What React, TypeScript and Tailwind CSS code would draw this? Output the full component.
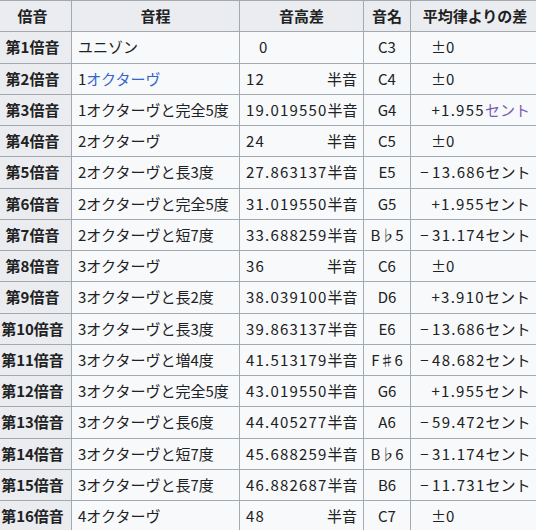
const rows = [
  { n: 1, iv: 'ユニゾン', st: '0', whole: true, note: 'C3', dev: '±0' },
  { n: 2, iv: '1オクターヴ', st: '12', whole: true, note: 'C4', dev: '±0', link: true },
  { n: 3, iv: '1オクターヴと完全5度', st: '19.019550', note: 'G4', dev: '+1.955', visited: true },
  { n: 4, iv: '2オクターヴ', st: '24', whole: true, note: 'C5', dev: '±0' },
  { n: 5, iv: '2オクターヴと長3度', st: '27.863137', note: 'E5', dev: '−13.686' },
  { n: 6, iv: '2オクターヴと完全5度', st: '31.019550', note: 'G5', dev: '+1.955' },
  { n: 7, iv: '2オクターヴと短7度', st: '33.688259', note: 'B♭5', dev: '−31.174' },
  { n: 8, iv: '3オクターヴ', st: '36', whole: true, note: 'C6', dev: '±0' },
  { n: 9, iv: '3オクターヴと長2度', st: '38.039100', note: 'D6', dev: '+3.910' },
  { n: 10, iv: '3オクターヴと長3度', st: '39.863137', note: 'E6', dev: '−13.686' },
  { n: 11, iv: '3オクターヴと増4度', st: '41.513179', note: 'F♯6', dev: '−48.682' },
  { n: 12, iv: '3オクターヴと完全5度', st: '43.019550', note: 'G6', dev: '+1.955' },
  { n: 13, iv: '3オクターヴと長6度', st: '44.405277', note: 'A6', dev: '−59.472' },
  { n: 14, iv: '3オクターヴと短7度', st: '45.688259', note: 'B♭6', dev: '−31.174' },
  { n: 15, iv: '3オクターヴと長7度', st: '46.882687', note: 'B6', dev: '−11.731' },
  { n: 16, iv: '4オクターヴ', st: '48', whole: true, note: 'C7', dev: '±0' },
];

const cell = 'border border-[#a2a9b1] px-[6px] py-[3px] h-[31.25px] whitespace-nowrap';
const head = `${cell} bg-[#eaecf0] font-bold text-center`;
const body = `${cell} bg-[#f8f9fa]`;

// cents column: the minus sign is drawn full width in the original
const Cents = ({ dev, visited }: { dev: string; visited?: boolean }) => {
  const neg = dev.startsWith('−');
  return (
    <span className="pr-[3px]">
      {neg ? (
        <span className="inline-block w-[15px] text-center">−</span>
      ) : null}
      <span className="tracking-[1.3px]">{neg ? dev.slice(1) : dev}</span>
      <span className={visited ? 'text-[#795cb2]' : ''}>セント</span>
    </span>
  );
};

export default function App() {
  return (
    <div className="w-[536px] h-[530px] overflow-hidden bg-white">
      <table
        className="ml-[-7px] border-collapse table-fixed text-[15px] leading-[24px] text-[#202122]"
        style={{ fontFamily: '"Noto Sans CJK JP", "Noto Sans", sans-serif', width: 546 }}
      >
        <colgroup>
          <col className="w-[78px]" />
          <col className="w-[168px]" />
          <col className="w-[124px]" />
          <col className="w-[47px]" />
          <col className="w-[129px]" />
        </colgroup>
        <thead>
          <tr>
            <th className={head}>倍音</th>
            <th className={head}>音程</th>
            <th className={head}>音高差</th>
            <th className={head}>音名</th>
            <th className={head}>平均律よりの差</th>
          </tr>
        </thead>
        <tbody>
          {rows.map((r) => (
            <tr key={r.n}>
              <th className={head}>第{r.n}倍音</th>
              <td className={body}>
                {r.link ? (
                  <>
                    1<span className="text-[#3366cc]">オクターヴ</span>
                  </>
                ) : (
                  r.iv
                )}
              </td>
              <td className={body}>
                {r.n === 1 ? (
                  <span className="pl-[13px]">0</span>
                ) : r.whole ? (
                  <div className="flex justify-between">
                    <span className="tracking-[1.2px]">{r.st}</span>
                    <span>半音</span>
                  </div>
                ) : (
                  <div className="flex justify-between">
                    <span className="tracking-[1.2px]">{r.st}</span>
                    <span>半音</span>
                  </div>
                )}
              </td>
              <td className={`${body} text-center`}>{r.note}</td>
              {r.dev === '±0' ? (
                <td className={body}>
                  <span className="pl-[14px]">±0</span>
                </td>
              ) : (
                <td className={`${body} text-right`}>
                  <Cents dev={r.dev} visited={r.visited} />
                </td>
              )}
            </tr>
          ))}
        </tbody>
      </table>
    </div>
  );
}
